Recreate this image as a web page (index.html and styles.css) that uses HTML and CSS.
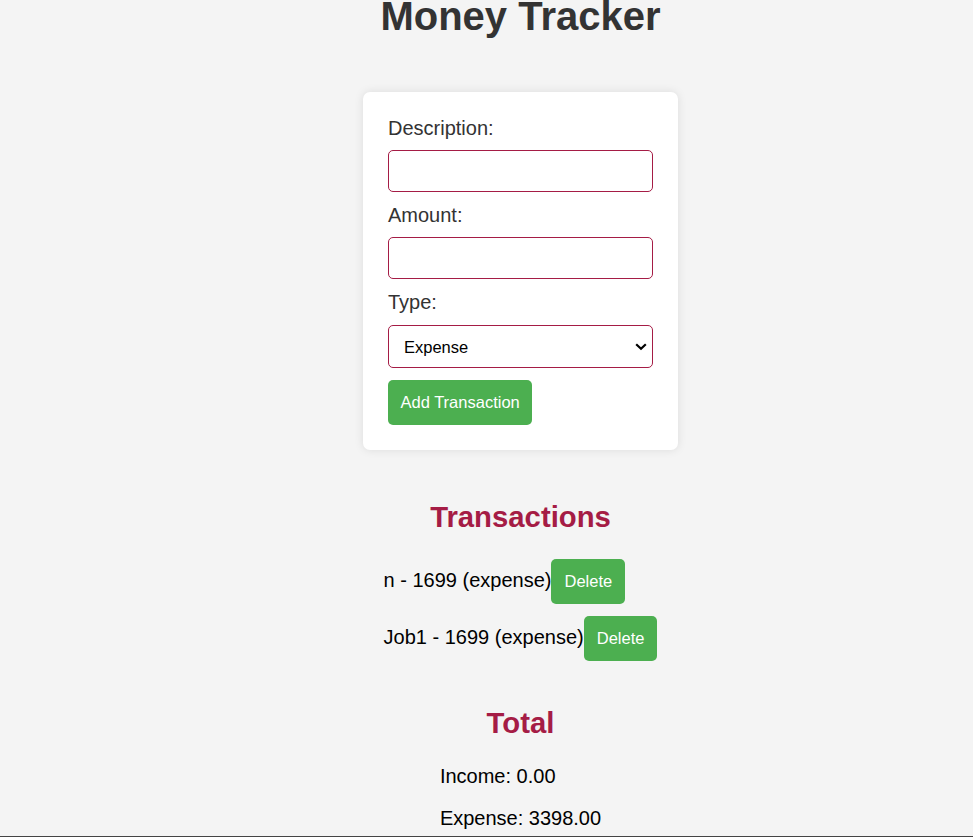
FILE: index.html
```html
<!DOCTYPE html>
<html lang="en">
<head>
<meta charset="utf-8">
<title>Money Tracker</title>
<link rel="stylesheet" href="styles.css">
</head>
<body>
<main class="page">
  <h1 class="title">Money Tracker</h1>
  <form class="card">
    <label class="field-label" for="desc">Description:</label>
    <input class="field" id="desc" type="text">
    <label class="field-label" for="amount">Amount:</label>
    <input class="field" id="amount" type="number">
    <label class="field-label" for="type">Type:</label>
    <div class="select-wrap">
      <select class="field select" id="type">
        <option>Expense</option>
        <option>Income</option>
      </select>
      <svg class="chevron" width="12" height="8" viewBox="0 0 12 8" aria-hidden="true"><path d="M1.2 1.2 L6 5.8 L10.8 1.2" fill="none" stroke="#000" stroke-width="2.2"/></svg>
    </div>
    <button type="button" class="btn">Add Transaction</button>
  </form>

  <h2 class="section-title tx-title">Transactions</h2>
  <ul class="tx-list">
    <li class="tx-item"><span class="tx-text">n - 1699 (expense)</span><button class="btn btn-del">Delete</button></li>
    <li class="tx-item"><span class="tx-text">Job1 - 1699 (expense)</span><button class="btn btn-del">Delete</button></li>
  </ul>

  <h2 class="section-title total-title">Total</h2>
  <div class="totals">
    <p class="total-line">Income: 0.00</p>
    <p class="total-line">Expense: 3398.00</p>
  </div>
</main>
<div class="bottom-edge"></div>
</body>
</html>
```
FILE: styles.css
```css
html, body {
  margin: 0;
  padding: 0;
}
body {
  background: #f4f4f4;
  font-family: "Liberation Sans", Arial, sans-serif;
  color: #333;
  overflow: hidden;
}
.page {
  padding-left: 68px;
  display: flex;
  flex-direction: column;
  align-items: center;
}
.title {
  margin: -4px 0 0;
  font-size: 40px;
  line-height: 40px;
  font-weight: bold;
  color: #333;
}
.card {
  margin-top: 56px;
  width: 315px;
  box-sizing: border-box;
  padding: 26px 25px 25px;
  background: #fff;
  border-radius: 7px;
  box-shadow: 0 0 10px rgba(0, 0, 0, 0.1);
  display: flex;
  flex-direction: column;
  align-items: flex-start;
}
.field-label {
  display: block;
  font-size: 20px;
  line-height: 21px;
  margin-bottom: 11px;
  color: #333;
}
.field {
  display: block;
  width: 100%;
  height: 42px;
  box-sizing: border-box;
  margin: 0 0 13px;
  border: 1px solid #a51c45;
  border-radius: 5px;
  background: #fff;
  font-family: "Liberation Sans", Arial, sans-serif;
  font-size: 16.5px;
  padding: 0 10px;
  outline: none;
}
.select-wrap {
  position: relative;
  width: 100%;
  margin-top: 1px;
}
.select {
  height: 43px;
  margin-bottom: 12px;
  padding: 0 15px;
  color: #000;
  appearance: none;
  -webkit-appearance: none;
}
.chevron {
  position: absolute;
  right: 6px;
  top: 18px;
  pointer-events: none;
}
.btn {
  background: #4caf50;
  color: #fff;
  border: none;
  border-radius: 5px;
  font-family: "Liberation Sans", Arial, sans-serif;
  font-size: 16.5px;
  line-height: 19px;
  height: 45px;
  padding: 13px 12.5px;
  box-sizing: border-box;
  cursor: pointer;
}
.section-title {
  margin: 0;
  font-size: 29.3px;
  line-height: 34px;
  font-weight: bold;
  color: #a51c45;
}
.tx-title {
  margin-top: 50px;
  margin-bottom: 25px;
}
.tx-list {
  list-style: none;
  margin: 0;
  padding: 0;
  align-self: center;
  width: fit-content;
}
.tx-item {
  display: flex;
  align-items: baseline;
  margin-bottom: 12px;
  color: #000;
}
.tx-text {
  font-size: 20px;
  line-height: 23px;
}
.btn-del {
  padding: 13px 13px;
}
.total-title {
  margin-top: 33px;
  margin-bottom: 25px;
}
.totals {
  width: fit-content;
}
.total-line {
  margin: 0 0 19px;
  font-size: 20px;
  line-height: 23px;
  color: #000;
}
.bottom-edge {
  position: fixed;
  left: 0;
  right: 0;
  bottom: 0;
  height: 1px;
  background: #444;
}
```
